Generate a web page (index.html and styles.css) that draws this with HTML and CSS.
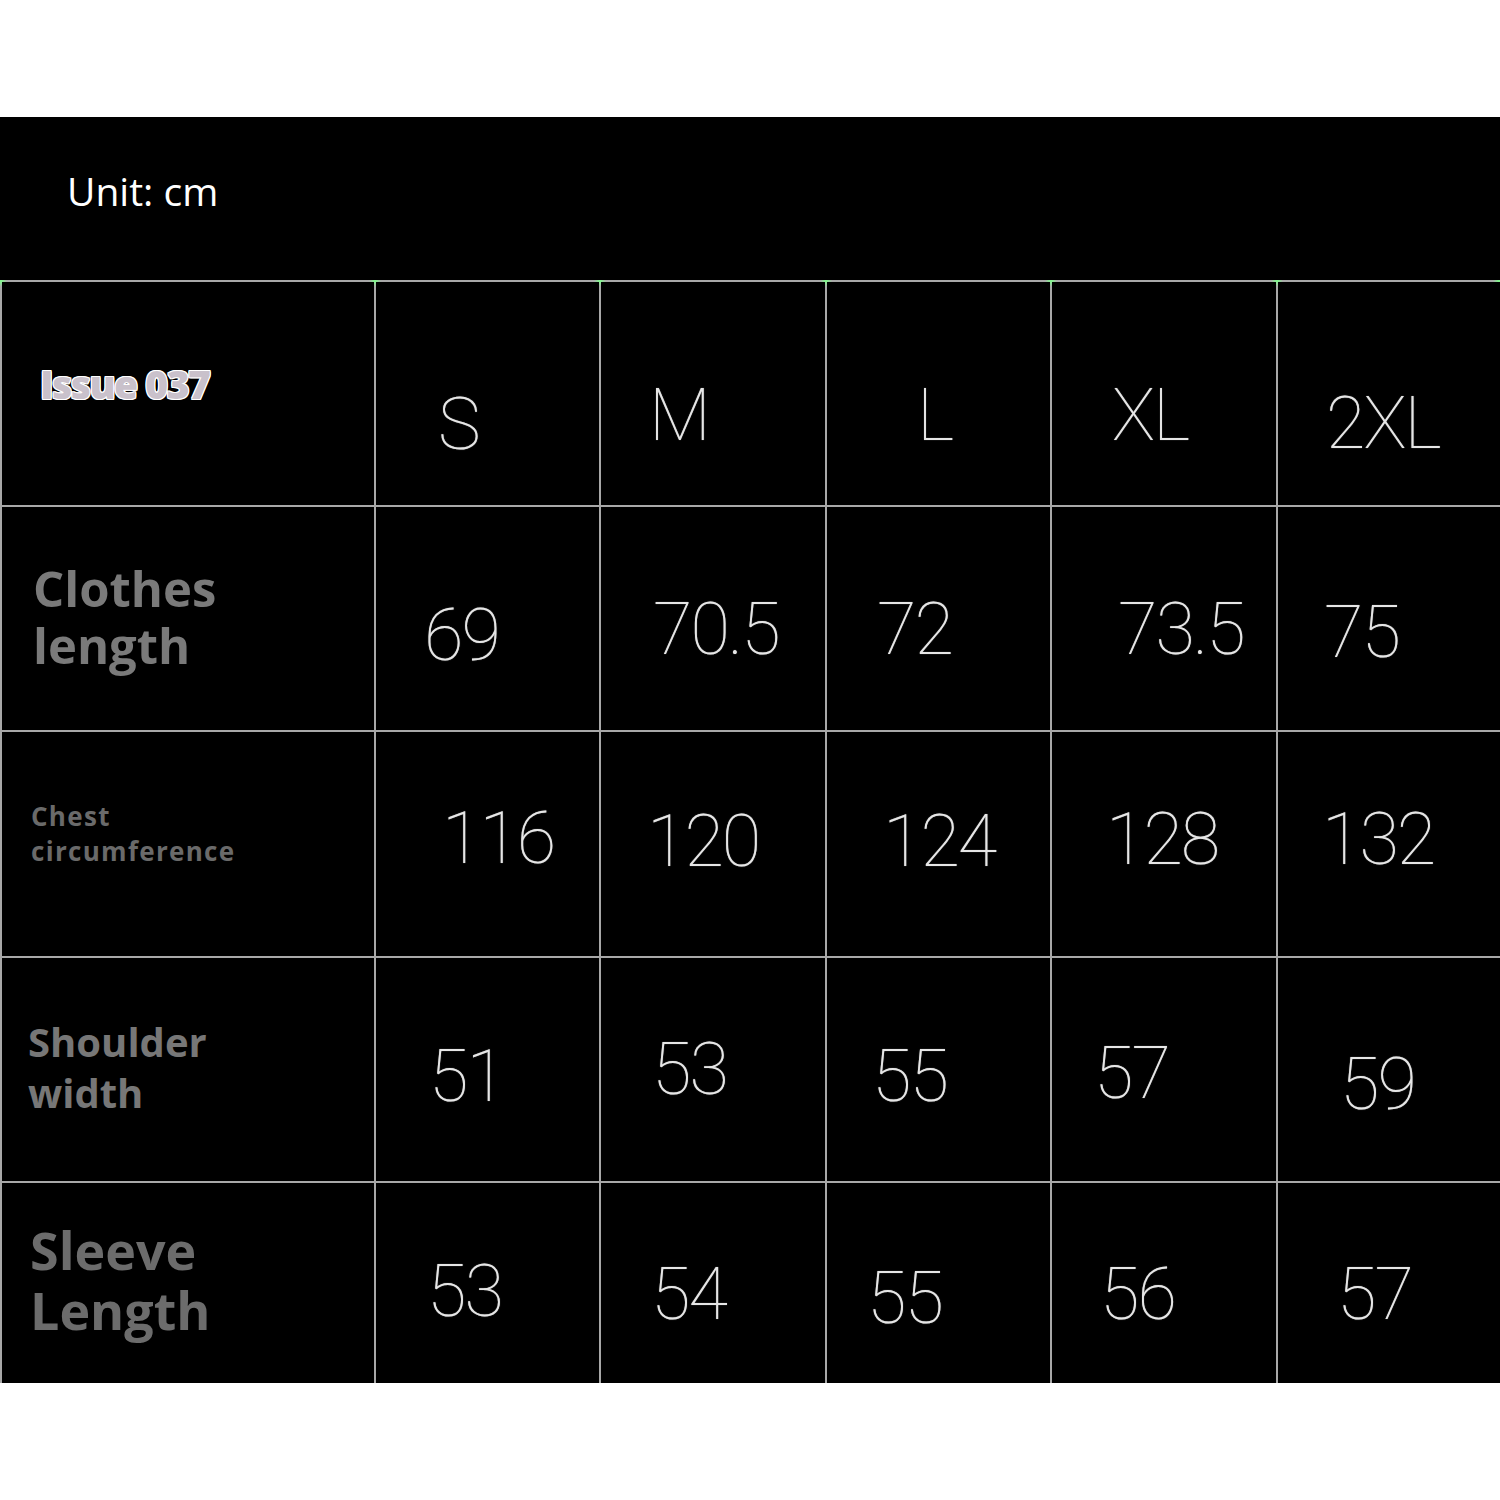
FILE: index.html
```html
<!DOCTYPE html>
<html lang="en">
<head>
<meta charset="utf-8">
<title>Size chart</title>
<link rel="stylesheet" href="styles.css">
</head>
<body>
<div class="sheet">
  <div class="unit">Unit: cm</div>
  <div class="chart">
    <div class="row r-head">
      <div class="cell label"><span class="issue">Issue 037</span></div>
      <div class="cell val">S</div>
      <div class="cell val">M</div>
      <div class="cell val">L</div>
      <div class="cell val">XL</div>
      <div class="cell val">2XL</div>
    </div>
    <div class="row r-length">
      <div class="cell label">Clothes<br>length</div>
      <div class="cell val">69</div>
      <div class="cell val">70.5</div>
      <div class="cell val">72</div>
      <div class="cell val">73.5</div>
      <div class="cell val">75</div>
    </div>
    <div class="row r-chest">
      <div class="cell label">Chest<br>circumference</div>
      <div class="cell val">116</div>
      <div class="cell val">120</div>
      <div class="cell val">124</div>
      <div class="cell val">128</div>
      <div class="cell val">132</div>
    </div>
    <div class="row r-shoulder">
      <div class="cell label">Shoulder<br>width</div>
      <div class="cell val">51</div>
      <div class="cell val">53</div>
      <div class="cell val">55</div>
      <div class="cell val">57</div>
      <div class="cell val">59</div>
    </div>
    <div class="row r-sleeve">
      <div class="cell label">Sleeve<br>Length</div>
      <div class="cell val">53</div>
      <div class="cell val">54</div>
      <div class="cell val">55</div>
      <div class="cell val">56</div>
      <div class="cell val">57</div>
    </div>
  </div>
</div>
</body>
</html>
```

FILE: styles.css
```css
html, body {
  margin: 0;
  padding: 0;
  background: #ffffff;
}

.sheet {
  margin-top: 117px;
  height: 1266px;
  background: #000000;
  overflow: hidden;
}

.unit {
  height: 163px;
  box-sizing: border-box;
  padding: 51px 0 0 67px;
  font-family: "Open Sans", "Noto Sans", sans-serif;
  font-size: 39px;
  line-height: 46px;
  color: #ffffff;
}

.chart {
  display: flex;
  flex-direction: column;
  gap: 2px;
  padding: 2px 0 0 2px;
  background-color: #a8a8a8;
  background-image:
    radial-gradient(circle 6px at 1px 1px, #7dff8a 0, rgba(80,255,100,0) 6px),
    radial-gradient(circle 6px at 375px 1px, #7dff8a 0, rgba(80,255,100,0) 6px),
    radial-gradient(circle 6px at 600px 1px, #7dff8a 0, rgba(80,255,100,0) 6px),
    radial-gradient(circle 6px at 826px 1px, #7dff8a 0, rgba(80,255,100,0) 6px),
    radial-gradient(circle 6px at 1051px 1px, #7dff8a 0, rgba(80,255,100,0) 6px),
    radial-gradient(circle 6px at 1277px 1px, #7dff8a 0, rgba(80,255,100,0) 6px),
    radial-gradient(circle 6px at 1499px 1px, #7dff8a 0, rgba(80,255,100,0) 6px);
  background-repeat: no-repeat;
  height: 1103px;
  box-sizing: border-box;
}

.row {
  display: grid;
  grid-template-columns: 372px 223px 224px 223px 224px 222px;
  column-gap: 2px;
  height: 223px;
}

.r-chest { height: 224px; }
.r-sleeve { height: 200px; }

.cell {
  background: #000000;
  box-sizing: border-box;
}

/* value cells */
.val {
  font-family: "Roboto", "Liberation Sans", sans-serif;
  font-weight: 100;
  font-size: 72px;
  line-height: 72px;
  letter-spacing: -2px;
  color: #e6e6e6;
  text-shadow: 0 0 1px rgba(255,255,255,0.6);
}

/* row labels */
.label {
  font-family: "Open Sans", "Noto Sans", sans-serif;
  font-weight: 700;
  color: #787878;
}

.issue {
  display: inline-block;
  font-family: "Open Sans", "Noto Sans", sans-serif;
  font-weight: 800;
  font-size: 39px;
  line-height: 48px;
  letter-spacing: -1.5px;
  color: #c9c1cb;
  text-shadow: 1px 0 #fff, -1px 0 #fff, 0 1px #fff, 0 -1px #fff,
               1px 1px #fff, -1px -1px #fff, 1px -1px #fff, -1px 1px #fff;
}

.r-head .label { padding: 78px 0 0 38px; }
.r-length .label {
  padding: 53px 0 0 31px;
  font-size: 49px;
  line-height: 57px;
  color: #7a7a7a;
}
.r-chest .label {
  padding: 67px 0 0 29px;
  font-size: 26px;
  line-height: 35px;
  letter-spacing: 1.3px;
  color: #6a6a6a;
}
.r-shoulder .label {
  padding: 58px 0 0 26px;
  font-size: 40px;
  line-height: 51px;
  color: #777777;
}
.r-sleeve .label {
  padding: 37px 0 0 28px;
  font-size: 52px;
  line-height: 60px;
  color: #6c6c6c;
}

/* header sizes */
.r-head .val { padding-top: 98px; }
.r-head .val:nth-child(2) { padding: 107px 0 0 62px; }
.r-head .val:nth-child(3) { padding-left: 48px; }
.r-head .val:nth-child(4) { padding-left: 90px; }
.r-head .val:nth-child(5) { padding-left: 60px; }
.r-head .val:nth-child(6) { padding: 106px 0 0 48px; }

/* clothes length */
.r-length .val { padding-top: 87px; }
.r-length .val:nth-child(2) { padding: 93px 0 0 48px; }
.r-length .val:nth-child(3) { padding-left: 52px; }
.r-length .val:nth-child(4) { padding-left: 50px; }
.r-length .val:nth-child(5) { padding-left: 66px; }
.r-length .val:nth-child(6) { padding: 90px 0 0 46px; }

/* chest */
.r-chest .val { padding-top: 74px; }
.r-chest .val:nth-child(2) { padding: 71px 0 0 66px; }
.r-chest .val:nth-child(3) { padding-left: 46px; }
.r-chest .val:nth-child(4) { padding-left: 56px; }
.r-chest .val:nth-child(5) { padding: 72px 0 0 54px; }
.r-chest .val:nth-child(6) { padding: 72px 0 0 44px; }

/* shoulder */
.r-shoulder .val { padding-top: 83px; }
.r-shoulder .val:nth-child(2) { padding-left: 53px; }
.r-shoulder .val:nth-child(3) { padding: 76px 0 0 51px; }
.r-shoulder .val:nth-child(4) { padding-left: 45px; }
.r-shoulder .val:nth-child(5) { padding: 80px 0 0 42px; }
.r-shoulder .val:nth-child(6) { padding: 91px 0 0 62px; }

/* sleeve */
.r-sleeve .val { padding-top: 76px; }
.r-sleeve .val:nth-child(2) { padding: 73px 0 0 51px; }
.r-sleeve .val:nth-child(3) { padding-left: 50px; }
.r-sleeve .val:nth-child(4) { padding: 80px 0 0 40px; }
.r-sleeve .val:nth-child(5) { padding-left: 48px; }
.r-sleeve .val:nth-child(6) { padding-left: 59px; }
```
